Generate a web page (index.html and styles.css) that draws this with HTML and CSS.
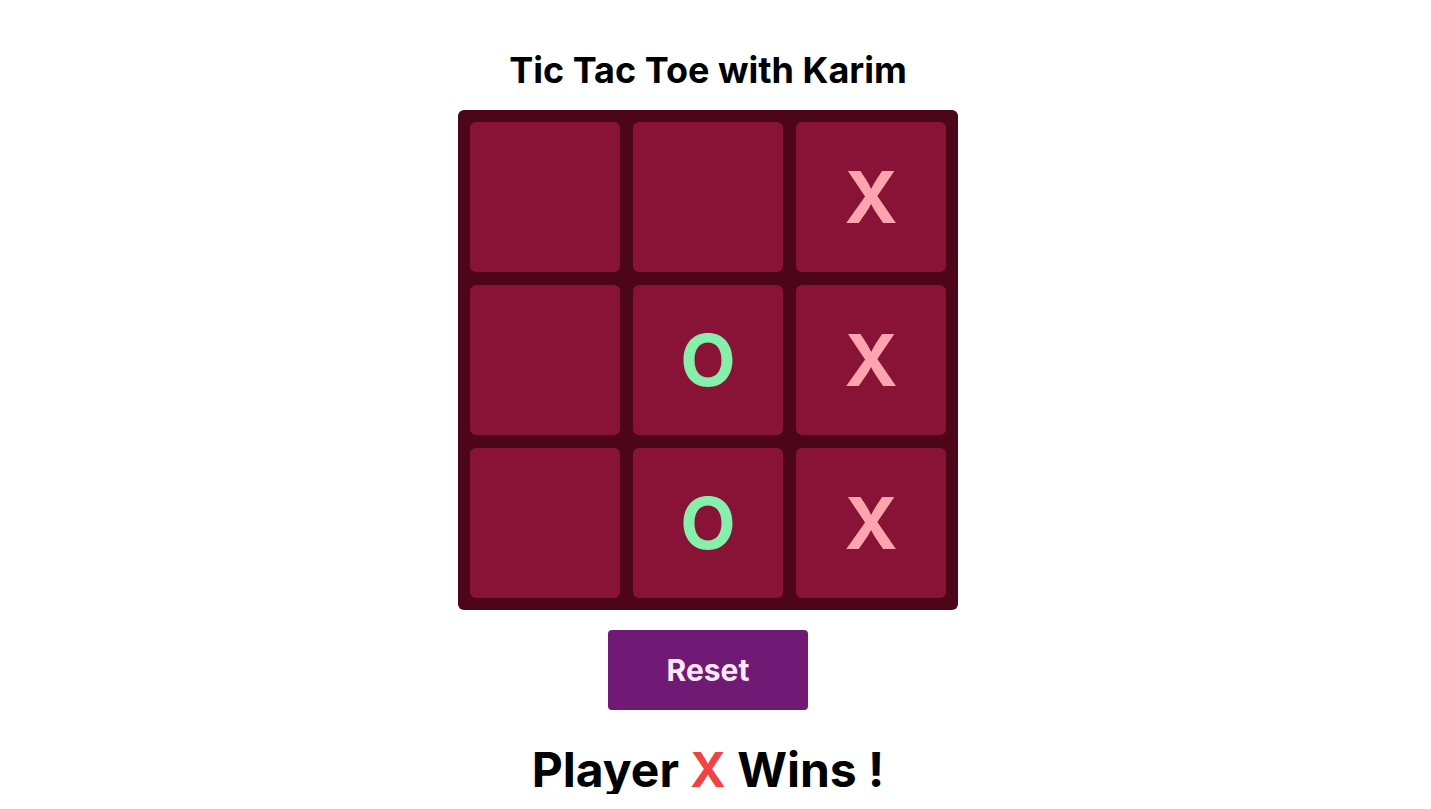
FILE: index.html
```html
<!DOCTYPE html>
<html lang="en">
<head>
<meta charset="utf-8">
<title>Tic Tac Toe with Karim</title>
<link rel="stylesheet" href="styles.css">
</head>
<body>
<main class="game">
  <h1 class="title">Tic Tac Toe with Karim</h1>
  <div class="board">
    <div class="cell"></div>
    <div class="cell"></div>
    <div class="cell x">X</div>
    <div class="cell"></div>
    <div class="cell o">O</div>
    <div class="cell x">X</div>
    <div class="cell"></div>
    <div class="cell o">O</div>
    <div class="cell x">X</div>
  </div>
  <button class="reset">Reset</button>
  <p class="status">Player <span class="winner">X</span> Wins !</p>
</main>
</body>
</html>
```

FILE: styles.css
```css
html, body {
  margin: 0;
  padding: 0;
  background: #ffffff;
}
body {
  font-family: Inter, "Noto Sans", sans-serif;
  color: #000000;
}
.game {
  display: flex;
  flex-direction: column;
  align-items: center;
  padding-top: 50px;
  padding-right: 15px;
}
.title {
  margin: 0;
  font-size: 36px;
  line-height: 40px;
  font-weight: 700;
}
.board {
  margin-top: 20px;
  width: 500px;
  height: 500px;
  box-sizing: border-box;
  padding: 12px;
  background: #4c0519;
  border-radius: 6px;
  display: grid;
  grid-template-columns: repeat(3, 1fr);
  grid-template-rows: repeat(3, 1fr);
  gap: 13px;
}
.cell {
  background: #881337;
  border-radius: 6px;
  display: flex;
  align-items: center;
  justify-content: center;
  font-size: 72px;
  font-weight: 700;
  line-height: 1;
}
.cell.x { color: #fda4af; }
.cell.o { color: #86efac; }
.reset {
  margin-top: 20px;
  width: 200px;
  height: 80px;
  border: none;
  border-radius: 4px;
  background: #701a75;
  color: #fae8ff;
  font-family: Inter, "Noto Sans", sans-serif;
  font-size: 30px;
  font-weight: 700;
  cursor: pointer;
}
.status {
  margin: 36px 0 0;
  font-size: 48px;
  line-height: 1;
  font-weight: 700;
}
.winner { color: #ef4444; }
```
